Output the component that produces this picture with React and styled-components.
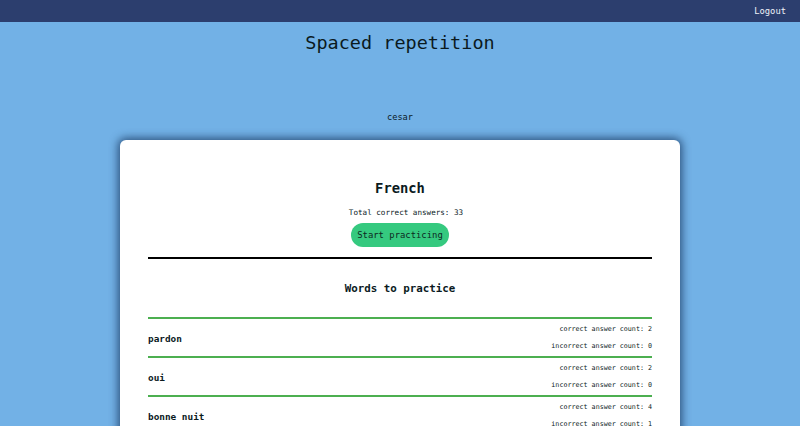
import React from "react";
import styled, { createGlobalStyle } from "styled-components";

const GlobalStyles = createGlobalStyle`
  body {
    margin: 0;
    background-color: #72b1e6;
    font-family: "DejaVu Sans Mono", "Liberation Mono", monospace;
    color: #0b1a1e;
    overflow: hidden;
  }
`;

const Header = styled.header`
  height: 22px;
  background-color: #2c3e6e;
  display: flex;
  align-items: center;
  justify-content: flex-end;
  padding-right: 14px;
`;

const LogoutButton = styled.button`
  background: none;
  border: none;
  padding: 0;
  font-family: inherit;
  font-size: 8.8px;
  color: #eef2f8;
  cursor: pointer;
`;

const Page = styled.div`
  display: flex;
  flex-direction: column;
  align-items: center;
`;

const Title = styled.h1`
  margin: 0;
  padding-top: 9px;
  font-size: 18.5px;
  font-weight: normal;
  line-height: 24px;
`;

const UserName = styled.div`
  margin-top: 56px;
  font-size: 8.6px;
  line-height: 12px;
`;

const Card = styled.section`
  margin-top: 17px;
  width: 560px;
  box-sizing: border-box;
  background: #fff;
  border-radius: 6px;
  box-shadow: 0 0 9px 2px rgba(20, 50, 90, 0.75);
  padding: 39px 28px 40px;
  display: flex;
  flex-direction: column;
  align-items: center;
`;

const Language = styled.h2`
  margin: 0;
  font-size: 13.8px;
  line-height: 18px;
  font-weight: bold;
`;

const Total = styled.p`
  margin: 11px 0 0 12px;
  font-size: 7.6px;
  line-height: 10px;
`;

const StartButton = styled.button`
  margin-top: 5px;
  height: 24px;
  width: 98px;
  border: none;
  border-radius: 12px;
  background-color: #35c97f;
  color: #0d2a1f;
  font-family: inherit;
  font-size: 8.9px;
  padding: 0;
  cursor: pointer;
`;

const Rule = styled.hr`
  align-self: stretch;
  margin: 10px 0 0;
  border: none;
  height: 2px;
  background: #000;
`;

const SubTitle = styled.h3`
  margin: 23px 0 21px;
  font-size: 10.8px;
  line-height: 14px;
  font-weight: bold;
`;

const WordList = styled.ul`
  align-self: stretch;
  list-style: none;
  margin: 0;
  padding: 0;
`;

const WordRow = styled.li`
  display: flex;
  justify-content: space-between;
  align-items: center;
  padding: 2px 0 1px;
  border-top: 2px solid #4caf50;
`;

const Word = styled.span`
  font-size: 9.4px;
  font-weight: bold;
`;

const Counts = styled.div`
  display: flex;
  flex-direction: column;
  align-items: flex-end;
  font-size: 6.7px;
  line-height: 17px;
`;

const words = [
  { text: "pardon", correct: 2, incorrect: 0 },
  { text: "oui", correct: 2, incorrect: 0 },
  { text: "bonne nuit", correct: 4, incorrect: 1 },
];

function App() {
  return (
    <>
      <GlobalStyles />
      <Header>
        <LogoutButton>Logout</LogoutButton>
      </Header>
      <Page>
        <Title>Spaced repetition</Title>
        <UserName>cesar</UserName>
        <Card>
          <Language>French</Language>
          <Total>Total correct answers: 33</Total>
          <StartButton>Start practicing</StartButton>
          <Rule />
          <SubTitle>Words to practice</SubTitle>
          <WordList>
            {words.map((w) => (
              <WordRow key={w.text}>
                <Word>{w.text}</Word>
                <Counts>
                  <span>correct answer count: {w.correct}</span>
                  <span>incorrect answer count: {w.incorrect}</span>
                </Counts>
              </WordRow>
            ))}
          </WordList>
        </Card>
      </Page>
    </>
  );
}

export default App;
